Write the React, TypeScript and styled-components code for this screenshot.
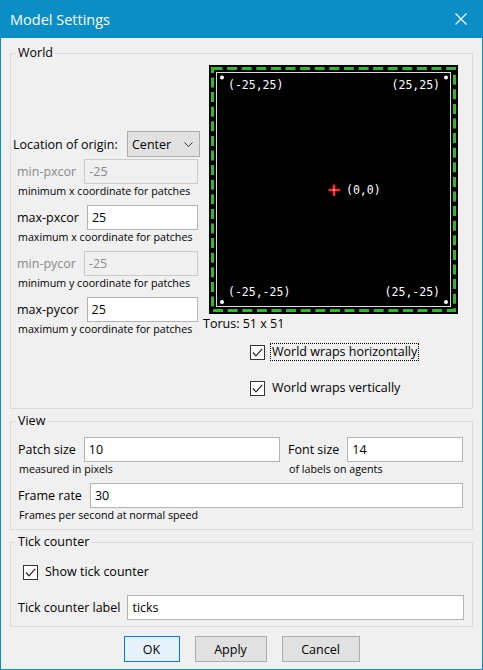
import React from "react";
import styled, { createGlobalStyle } from "styled-components";

const ACCENT = "#0b8dc6";

const GlobalStyle = createGlobalStyle`
  html, body { margin: 0; padding: 0; background: #f0f0f0; }
  body {
    font-family: "Open Sans", "Noto Sans", sans-serif;
    font-size: 12.5px;
    color: #000;
  }
  * { box-sizing: border-box; }
`;

const Window = styled.div`
  width: 483px;
  height: 670px;
  border: 1px solid ${ACCENT};
  border-top: none;
  background: #f0f0f0;
  display: flex;
  flex-direction: column;
`;

const TitleBar = styled.div`
  height: 38px;
  flex: none;
  background: ${ACCENT};
  color: #fff;
  display: flex;
  align-items: center;
  justify-content: space-between;
  padding: 0 15px 0 9px;
  font-size: 14.5px;
`;

const CloseIcon = () => (
  <svg width="12" height="12" viewBox="0 0 12 12">
    <path d="M0.5 0.5 L11.5 11.5 M11.5 0.5 L0.5 11.5" stroke="#fff" strokeWidth="1.2" fill="none" />
  </svg>
);

const Body = styled.div`
  padding: 7px 9px 0;
  display: flex;
  flex-direction: column;
  gap: 4px;
`;

const Group = styled.fieldset`
  margin: 0;
  padding: 0;
  min-width: 0;
  border: 1px solid #dcdcdc;
`;

const Legend = styled.legend`
  margin-left: 5px;
  padding: 0 2px;
  line-height: 16px;
  font-size: 12.5px;
`;

const WorldContent = styled.div`
  display: grid;
  grid-template-columns: 187px minmax(0, 1fr);
  column-gap: 3px;
  padding: 4px 0 11px 2px;
`;

const LeftCol = styled.div`
  padding-top: 66px;
  display: flex;
  flex-direction: column;
  min-width: 0;
`;

const OriginRow = styled.div`
  display: flex;
  align-items: center;
  justify-content: space-between;
  height: 26px;
  margin-bottom: 2px;
`;

const Combo = styled.div`
  width: 73px;
  height: 26px;
  display: flex;
  align-items: center;
  justify-content: space-between;
  padding: 0 6px 0 4px;
  background: #e1e1e1;
  border: 1px solid #adadad;
`;

const Chevron = () => (
  <svg width="9" height="5" viewBox="0 0 9 5">
    <path d="M0.5 0.5 L4.5 4.5 L8.5 0.5" stroke="#333" strokeWidth="1" fill="none" />
  </svg>
);

const CoordList = styled.div`
  padding: 0 2px 0 4px;
  display: flex;
  flex-direction: column;
  gap: 7px;
`;

const Field = styled.div`
  display: flex;
  flex-direction: column;
  min-width: 0;
`;

const FieldRow = styled.div`
  display: flex;
  align-items: center;
  height: 25px;
  min-width: 0;
`;

const FieldLabel = styled.span<{ $disabled?: boolean }>`
  white-space: nowrap;
  color: ${(p) => (p.$disabled ? "#8a8a8a" : "#000")};
`;

const TextBox = styled.input<{ $gap?: number }>`
  flex: 1;
  min-width: 0;
  width: 0;
  height: 25px;
  margin: 0 0 0 ${(p) => p.$gap ?? 8}px;
  padding: 0 4px;
  font-family: inherit;
  font-size: 12.5px;
  color: #000;
  background: #fff;
  border: 1px solid #b4b4b4;
  outline: none;
  &:disabled {
    background: #f0f0f0;
    border-color: #cccccc;
    color: #8a8a8a;
  }
`;

const Hint = styled.div`
  font-size: 10.7px;
  line-height: 14px;
  padding-left: 1px;
  white-space: nowrap;
`;

const RightCol = styled.div`
  display: flex;
  flex-direction: column;
  align-items: flex-start;
`;

const ViewFrame = styled.div`
  margin-left: 6px;
  width: 249px;
  height: 249px;
  & > svg { display: block; }
`;

const Torus = styled.div`
  margin-top: 2px;
  line-height: 16px;
`;

const CheckRow = styled.div<{ $top: number; $left: number }>`
  display: flex;
  align-items: center;
  gap: 5px;
  height: 18px;
  margin-top: ${(p) => p.$top}px;
  margin-left: ${(p) => p.$left}px;
`;

const Box = styled.span`
  width: 15px;
  height: 15px;
  border: 1px solid #333;
  background: #fff;
  display: flex;
  align-items: center;
  justify-content: center;
`;

const CheckText = styled.span<{ $focused?: boolean }>`
  line-height: 16px;
  padding: 0 1px;
  border: 1px dotted ${(p) => (p.$focused ? "#000" : "transparent")};
  white-space: nowrap;
`;

const Check = ({ label, focused, top, left }: { label: string; focused?: boolean; top: number; left: number }) => (
  <CheckRow $top={top} $left={left}>
    <Box>
      <svg width="13" height="13" viewBox="0 0 13 13">
        <path d="M2 6.5 L5 9.8 L11.2 2.8" stroke="#222" strokeWidth="1.2" fill="none" />
      </svg>
    </Box>
    <CheckText $focused={focused}>{label}</CheckText>
  </CheckRow>
);

const ViewContent = styled.div`
  padding: 8px 9px 7px 7px;
  display: flex;
  flex-direction: column;
  gap: 7px;
`;

const PairGrid = styled.div`
  display: grid;
  grid-template-columns: 262px minmax(0, 1fr);
  column-gap: 8px;
`;

const TickContent = styled.div`
  padding: 13px 8px 6px 7px;
  display: flex;
  flex-direction: column;
  gap: 14px;
`;

const ButtonRow = styled.div`
  margin-top: 5px;
  display: flex;
  justify-content: center;
  gap: 15px;
`;

const Button = styled.button<{ $width: number; $primary?: boolean }>`
  width: ${(p) => p.$width}px;
  height: 26px;
  font-family: inherit;
  font-size: 12.5px;
  color: #000;
  padding: 0;
  background: ${(p) => (p.$primary ? "#e5f1fb" : "#e1e1e1")};
  border: 1px solid ${(p) => (p.$primary ? "#0078d7" : "#adadad")};
`;

const MONO = "'DejaVu Sans Mono', 'Liberation Mono', monospace";

const WorldView = () => (
  <svg width="249" height="249" viewBox="0 0 249 249">
    <rect x="0" y="0" width="249" height="249" fill="#000" />
    <rect x="3.5" y="3.5" width="242" height="242" fill="none" stroke="#35b52e" strokeWidth="3" strokeDasharray="10 4.6" />
    <rect x="7.5" y="7.5" width="234" height="234" fill="none" stroke="#dcdcdc" strokeWidth="1" />
    {[
      [13, 12.5],
      [237, 12.5],
      [13, 237],
      [237, 237],
    ].map(([cx, cy], i) => (
      <circle key={i} cx={cx} cy={cy} r="2" fill="#fff" />
    ))}
    <g fill="#fff" fontFamily={MONO} fontSize="11.5">
      <text x="19" y="24">(-25,25)</text>
      <text x="231" y="24" textAnchor="end">(25,25)</text>
      <text x="19" y="231">(-25,-25)</text>
      <text x="231" y="231" textAnchor="end">(25,-25)</text>
      <text x="137" y="128.5">(0,0)</text>
    </g>
    <path d="M119.5 125 H131 M125 119.5 V131" stroke="#ff2a2a" strokeWidth="2.6" />
    <circle cx="125" cy="125" r="1.1" fill="#ffc8c8" />
  </svg>
);

const coords = [
  { label: "min-pxcor", value: "-25", hint: "minimum x coordinate for patches", disabled: true },
  { label: "max-pxcor", value: "25", hint: "maximum x coordinate for patches", disabled: false },
  { label: "min-pycor", value: "-25", hint: "minimum y coordinate for patches", disabled: true },
  { label: "max-pycor", value: "25", hint: "maximum y coordinate for patches", disabled: false },
];

export default function App() {
  return (
    <>
      <GlobalStyle />
      <Window>
        <TitleBar>
          <span>Model Settings</span>
          <CloseIcon />
        </TitleBar>
        <Body>
          <Group>
            <Legend>World</Legend>
            <WorldContent>
              <LeftCol>
                <OriginRow>
                  <FieldLabel>Location of origin:</FieldLabel>
                  <Combo>
                    <span>Center</span>
                    <Chevron />
                  </Combo>
                </OriginRow>
                <CoordList>
                  {coords.map((c) => (
                    <Field key={c.label}>
                      <FieldRow>
                        <FieldLabel $disabled={c.disabled}>{c.label}</FieldLabel>
                        <TextBox readOnly disabled={c.disabled} defaultValue={c.value} />
                      </FieldRow>
                      <Hint>{c.hint}</Hint>
                    </Field>
                  ))}
                </CoordList>
              </LeftCol>
              <RightCol>
                <ViewFrame>
                  <WorldView />
                </ViewFrame>
                <Torus>Torus: 51 x 51</Torus>
                <Check label="World wraps horizontally" focused top={11} left={47} />
                <Check label="World wraps vertically" top={18} left={47} />
              </RightCol>
            </WorldContent>
          </Group>

          <Group>
            <Legend>View</Legend>
            <ViewContent>
              <PairGrid>
                <Field>
                  <FieldRow>
                    <FieldLabel>Patch size</FieldLabel>
                    <TextBox readOnly defaultValue="10" />
                  </FieldRow>
                  <Hint>measured in pixels</Hint>
                </Field>
                <Field>
                  <FieldRow>
                    <FieldLabel>Font size</FieldLabel>
                    <TextBox readOnly defaultValue="14" />
                  </FieldRow>
                  <Hint>of labels on agents</Hint>
                </Field>
              </PairGrid>
              <Field>
                <FieldRow>
                  <FieldLabel>Frame rate</FieldLabel>
                  <TextBox readOnly defaultValue="30" />
                </FieldRow>
                <Hint>Frames per second at normal speed</Hint>
              </Field>
            </ViewContent>
          </Group>

          <Group>
            <Legend>Tick counter</Legend>
            <TickContent>
              <Check label="Show tick counter" top={0} left={5} />
              <FieldRow>
                <FieldLabel>Tick counter label</FieldLabel>
                <TextBox readOnly $gap={7} defaultValue="ticks" />
              </FieldRow>
            </TickContent>
          </Group>

          <ButtonRow>
            <Button $width={56} $primary>OK</Button>
            <Button $width={72}>Apply</Button>
            <Button $width={78}>Cancel</Button>
          </ButtonRow>
        </Body>
      </Window>
    </>
  );
}
